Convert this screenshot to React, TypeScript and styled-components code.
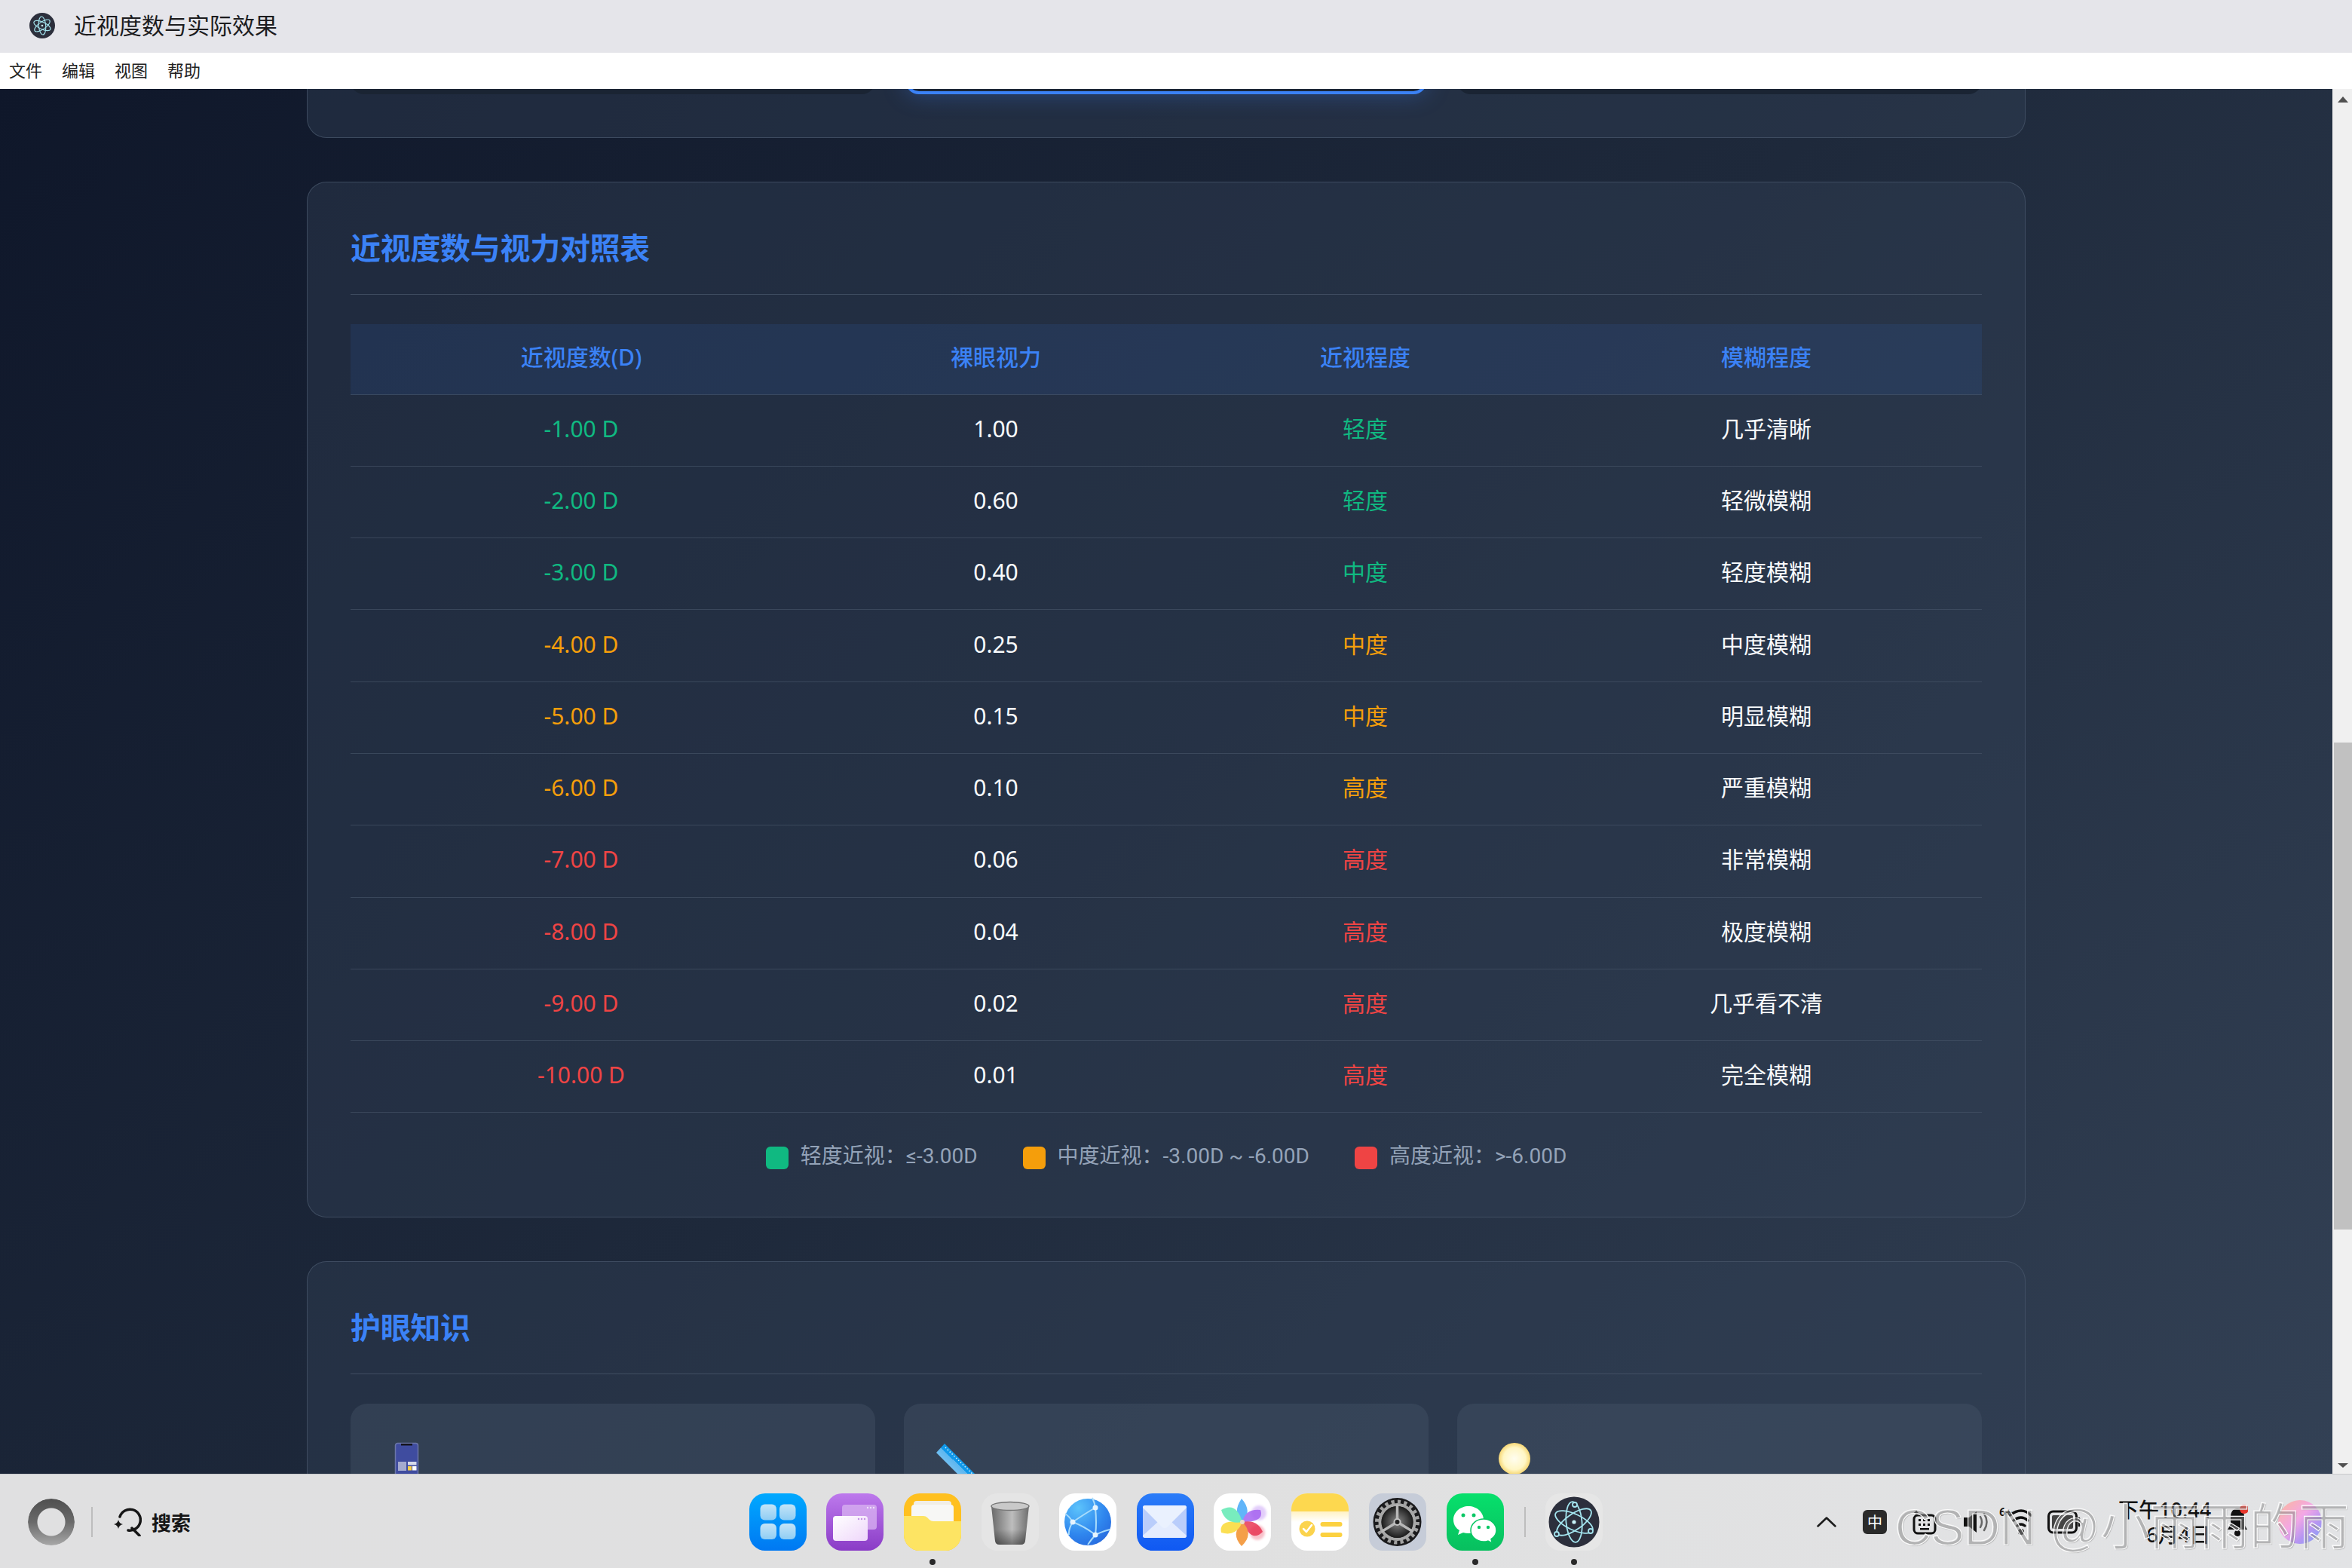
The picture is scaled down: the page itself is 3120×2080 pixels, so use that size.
import React from "react";
import styled, { createGlobalStyle } from "styled-components";

const GlobalStyle = createGlobalStyle`
  html, body {
    margin: 0;
    padding: 0;
    background: #e0e0e0;
  }
  body {
    font-family: "Noto Sans", "Noto Sans CJK SC", sans-serif;
  }
  * {
    box-sizing: border-box;
  }
`;

const GREEN = "#10b981";
const ORANGE = "#f59e0b";
const RED = "#ef4444";

const rows = [
  { d: "-1.00 D", v: "1.00", level: "轻度", blur: "几乎清晰", color: GREEN },
  { d: "-2.00 D", v: "0.60", level: "轻度", blur: "轻微模糊", color: GREEN },
  { d: "-3.00 D", v: "0.40", level: "中度", blur: "轻度模糊", color: GREEN },
  { d: "-4.00 D", v: "0.25", level: "中度", blur: "中度模糊", color: ORANGE },
  { d: "-5.00 D", v: "0.15", level: "中度", blur: "明显模糊", color: ORANGE },
  { d: "-6.00 D", v: "0.10", level: "高度", blur: "严重模糊", color: ORANGE },
  { d: "-7.00 D", v: "0.06", level: "高度", blur: "非常模糊", color: RED },
  { d: "-8.00 D", v: "0.04", level: "高度", blur: "极度模糊", color: RED },
  { d: "-9.00 D", v: "0.02", level: "高度", blur: "几乎看不清", color: RED },
  { d: "-10.00 D", v: "0.01", level: "高度", blur: "完全模糊", color: RED },
];

const legend = [
  { label: "轻度近视：≤-3.00D", color: GREEN },
  { label: "中度近视：-3.00D ~ -6.00D", color: ORANGE },
  { label: "高度近视：>-6.00D", color: RED },
];

const Screen = styled.div`
  position: relative;
  width: 3120px;
  height: 2080px;
  display: flex;
  flex-direction: column;
  overflow: hidden;
`;

const TitleBar = styled.div`
  height: 70px;
  flex: none;
  background: #e5e5ea;
  display: flex;
  align-items: center;
  padding: 0 0 3px 39px;
  gap: 25px;
  font-size: 30px;
  line-height: 40px;
  color: #1c1c1e;
`;

const MenuBar = styled.div`
  height: 48px;
  flex: none;
  background: #fff;
  display: flex;
  align-items: center;
  padding: 0 0 3px 12px;
  gap: 26px;
  font-size: 22px;
  line-height: 30px;
  color: #222;
`;

const Middle = styled.div`
  flex: 1;
  min-height: 0;
  display: flex;
`;

const Content = styled.div`
  flex: 1;
  min-width: 0;
  overflow: hidden;
  display: flex;
  flex-direction: column;
  align-items: center;
  gap: 58px;
  background: linear-gradient(135deg, #0f172a 0%, #1e293b 50%, #334155 100%);
`;

const Card = styled.section<{ $clipped?: boolean }>`
  width: 2280px;
  flex: none;
  padding: 58px 57px ${(p) => (p.$clipped ? "57px" : "58px")};
  margin-top: ${(p) => (p.$clipped ? "-150px" : "0")};
  background: rgba(51, 65, 85, 0.42);
  border: 1px solid rgba(71, 85, 105, 0.75);
  border-radius: 26px;
`;

const Options = styled.div`
  height: 98px;
  display: grid;
  grid-template-columns: repeat(3, 1fr);
  gap: 38px;
`;

const Option = styled.div<{ $active?: boolean }>`
  background: ${(p) => (p.$active ? "#1b2636" : "#1a2433")};
  border-radius: 18px;
  border: ${(p) => (p.$active ? "4px solid #3b82f6" : "none")};
  box-shadow: ${(p) => (p.$active ? "0 0 30px rgba(59, 130, 246, 0.35)" : "none")};
  margin: ${(p) => (p.$active ? "0 2px" : "0")};
`;

const Heading = styled.h2`
  margin: 0 0 39px;
  height: 91px;
  padding-bottom: 32px;
  border-bottom: 1px solid rgba(71, 85, 105, 0.8);
  font-size: 40px;
  line-height: 58px;
  letter-spacing: -0.3px;
  font-weight: 700;
  color: #3b82f6;
`;

const Row = styled.div<{ $head?: boolean }>`
  display: grid;
  grid-template-columns: 612px 488px 492px 572px;
  height: ${(p) => (p.$head ? "93.5px" : "95.3px")};
  border-bottom: 1px solid rgba(71, 85, 105, 0.65);
  background: ${(p) => (p.$head ? "rgba(59, 130, 246, 0.1)" : "transparent")};
  color: ${(p) => (p.$head ? "#3b82f6" : "#f8fafc")};
  font-weight: ${(p) => (p.$head ? 500 : 400)};
  font-size: 30px;
  line-height: 40px;
`;

const Cell = styled.div<{ $color?: string }>`
  display: flex;
  align-items: center;
  justify-content: center;
  padding-bottom: 4px;
  color: ${(p) => p.$color || "inherit"};
`;

const Legend = styled.div`
  display: flex;
  justify-content: center;
  gap: 60px;
  height: 30px;
  margin: 45px 0 5px;
  font-family: Roboto, "Noto Sans CJK SC", sans-serif;
  font-size: 28px;
  line-height: 30px;
  color: #94a3b8;
`;

const LegendItem = styled.div`
  display: flex;
  align-items: center;
  gap: 16px;
`;

const LegendText = styled.span`
  padding-bottom: 4px;
`;

const Swatch = styled.span<{ $color: string }>`
  width: 30px;
  height: 30px;
  border-radius: 6px;
  background: ${(p) => p.$color};
`;

const TipGrid = styled.div`
  display: grid;
  grid-template-columns: repeat(3, 1fr);
  gap: 38px;
`;

const Tip = styled.div`
  height: 300px;
  padding: 52px 46px;
  background: rgba(71, 85, 105, 0.4);
  border-radius: 22px;
`;

const Emoji = styled.svg`
  display: block;
  width: 60px;
  height: 60px;
  overflow: visible;
`;

const ScrollBar = styled.div`
  width: 26px;
  flex: none;
  background: #f0f0f0;
  display: flex;
  flex-direction: column;
  align-items: flex-end;
`;

const Arrow = styled.span<{ $down?: boolean }>`
  width: 0;
  height: 0;
  margin: ${(p) => (p.$down ? "auto 5px 8px 0" : "10px 5px 0 0")};
  border-left: 7px solid transparent;
  border-right: 7px solid transparent;
  ${(p) => (p.$down ? "border-top: 6px solid #505050;" : "border-bottom: 8px solid #505050;")}
`;

const Thumb = styled.div`
  width: 24px;
  height: 646px;
  margin-top: 849px;
  background: #c1c1c1;
`;

const Taskbar = styled.footer`
  height: 125px;
  flex: none;
  background: linear-gradient(90deg, #e0e0e1, #e0e0e0 50%, #e2e3e5);
  border-top: 1px solid #c9cacc;
  padding-top: 1px;
  display: grid;
  grid-template-columns: 1fr auto 1fr;
  align-items: center;
`;

const TaskLeft = styled.div`
  display: flex;
  align-items: center;
  padding-left: 37px;
`;

const Ring = styled.div`
  width: 62px;
  height: 62px;
  border-radius: 50%;
  background: linear-gradient(180deg, #4f4f4f, #6a6a6a 50%, #a8a8a8);
  -webkit-mask: radial-gradient(circle, transparent 18px, #000 19px);
  mask: radial-gradient(circle, transparent 18px, #000 19px);
`;

const Divider = styled.span<{ $left: number; $right: number }>`
  width: 2px;
  height: 40px;
  background: #bdbdbd;
  margin: 0 ${(p) => p.$right}px 0 ${(p) => p.$left}px;
`;

const SearchText = styled.span`
  font-size: 26px;
  font-weight: 700;
  color: #161616;
  margin-left: 13px;
`;

const Dock = styled.div`
  display: flex;
  align-items: center;
  gap: 26.8px;
`;

const DockSlot = styled.div`
  position: relative;
  width: 76px;
  height: 76px;
  svg {
    display: block;
  }
`;

const RunDot = styled.span`
  position: absolute;
  left: 34px;
  bottom: -19px;
  width: 8px;
  height: 8px;
  border-radius: 50%;
  background: #2a2a2a;
`;

const Tray = styled.div`
  display: flex;
  align-items: center;
  justify-content: flex-end;
  padding-right: 39px;
`;

const TrayItem = styled.div<{ $gap: number }>`
  position: relative;
  display: flex;
  margin-left: ${(p) => p.$gap}px;
`;

const ImeBadge = styled.div`
  width: 32px;
  height: 32px;
  border-radius: 6px;
  background: #2a2a2a;
  color: #fff;
  font-size: 20px;
  display: flex;
  align-items: center;
  justify-content: center;
`;

const Clock = styled.div`
  width: 122px;
  text-align: right;
  font-size: 27px;
  line-height: 33px;
  font-weight: 500;
  color: #111;
  white-space: nowrap;
`;

const Watermark = styled.div`
  position: absolute;
  right: 4px;
  bottom: 19px;
  font-family: "Liberation Sans", "Noto Sans CJK SC", sans-serif;
  font-size: 66px;
  line-height: 70px;
  white-space: nowrap;
  color: rgba(255, 255, 255, 0.08);
  -webkit-text-stroke: 1.2px #fbfbfb;
  text-shadow: 1px 1px 1px rgba(120, 120, 120, 0.5);
`;

const ElectronMark = ({ size }: { size: number }) => (
  <svg width={size} height={size} viewBox="0 0 76 76">
    <g fill="none" stroke="#a3e4ee" strokeWidth="2.500">
      <ellipse cx="38" cy="38" rx="27" ry="10.500" transform="rotate(25 38 38)" />
      <ellipse cx="38" cy="38" rx="27" ry="10.500" transform="rotate(85 38 38)" />
      <ellipse cx="38" cy="38" rx="27" ry="10.500" transform="rotate(145 38 38)" />
    </g>
    <circle cx="38" cy="38" r="3" fill="#c7f2f8" />
  </svg>
);

const AppBadge = styled.div`
  width: 34px;
  height: 34px;
  border-radius: 50%;
  background: #2c2f3c;
`;

const icons = {
  launcher: (
    <svg width="76" height="76" viewBox="0 0 76 76">
      <defs>
        <linearGradient id="lnA" x1="0" y1="0" x2="0" y2="1">
          <stop offset="0" stopColor="#00a9ff" />
          <stop offset="1" stopColor="#0078f2" />
        </linearGradient>
        <linearGradient id="lnB" x1="0" y1="0" x2="0" y2="1">
          <stop offset="0" stopColor="#c4e4f7" />
          <stop offset="1" stopColor="#8fcdf4" />
        </linearGradient>
      </defs>
      <rect width="76" height="76" rx="21" fill="url(#lnA)" />
      <rect x="14.500" y="14.500" width="21.500" height="21" rx="6" fill="url(#lnB)" />
      <rect x="40" y="14.500" width="21.500" height="21" rx="6" fill="url(#lnB)" />
      <rect x="14.500" y="40" width="21.500" height="21" rx="6" fill="url(#lnB)" />
      <rect x="40" y="40" width="21.500" height="21" rx="6" fill="url(#lnB)" />
    </svg>
  ),
  windows: (
    <svg width="76" height="76" viewBox="0 0 76 76">
      <defs>
        <linearGradient id="wnA" x1="0" y1="0" x2="0" y2="1">
          <stop offset="0" stopColor="#bd79ec" />
          <stop offset="1" stopColor="#8a3cc6" />
        </linearGradient>
        <linearGradient id="wnB" x1="0" y1="0" x2="1" y2="1">
          <stop offset="0" stopColor="#ffffff" />
          <stop offset="1" stopColor="#eed6fa" />
        </linearGradient>
      </defs>
      <rect width="76" height="76" rx="21" fill="url(#wnA)" />
      <rect x="21" y="15" width="46" height="33" rx="4" fill="#d9b4f1" opacity="0.75" />
      <rect x="9" y="30" width="46" height="33" rx="4" fill="url(#wnB)" />
      <g fill="#c58fe6">
        <circle cx="43" cy="34" r="1.200" />
        <circle cx="47" cy="34" r="1.200" />
        <circle cx="51" cy="34" r="1.200" />
      </g>
      <g fill="#efe0f8">
        <circle cx="55" cy="19" r="1.200" />
        <circle cx="59" cy="19" r="1.200" />
        <circle cx="63" cy="19" r="1.200" />
      </g>
    </svg>
  ),
  folder: (
    <svg width="76" height="76" viewBox="0 0 76 76">
      <rect width="76" height="76" rx="21" fill="#ffc01f" />
      <rect x="13" y="10" width="50" height="30" rx="4" fill="#f1eee6" />
      <rect x="10" y="15" width="56" height="30" rx="4" fill="#f7f7f5" />
      <path d="M0 30h26q3 0 5 2l3 3q2 2 5 2h37v18a21 21 0 0 1-21 21H21A21 21 0 0 1 0 55z" fill="#fde463" />
    </svg>
  ),
  trash: (
    <svg width="76" height="76" viewBox="0 0 76 76">
      <defs>
        <linearGradient id="trA" x1="0" y1="0" x2="1" y2="0">
          <stop offset="0" stopColor="#6a6a6a" />
          <stop offset="0.55" stopColor="#bdbdbd" />
          <stop offset="1" stopColor="#6e6e6e" />
        </linearGradient>
        <linearGradient id="trB" x1="0" y1="0" x2="0" y2="1">
          <stop offset="0.6" stopColor="#000" stopOpacity="0" />
          <stop offset="1" stopColor="#000" stopOpacity="0.4" />
        </linearGradient>
      </defs>
      <rect width="76" height="76" rx="21" fill="#e5e5e5" />
      <path d="M13 17h50l-5 46q-.5 5-6 5H24q-5.500 0-6-5z" fill="url(#trA)" />
      <path d="M13 17h50l-5 46q-.5 5-6 5H24q-5.500 0-6-5z" fill="url(#trB)" />
      <ellipse cx="38" cy="17" rx="25" ry="5.500" fill="#c9c9c9" stroke="#777" strokeWidth="1.500" />
    </svg>
  ),
  globe: (
    <svg width="76" height="76" viewBox="0 0 76 76">
      <defs>
        <radialGradient id="glA" cx="0.3" cy="0.2" r="0.95">
          <stop offset="0" stopColor="#5cc3fb" />
          <stop offset="0.6" stopColor="#2f86ee" />
          <stop offset="1" stopColor="#2566dc" />
        </radialGradient>
      </defs>
      <rect width="76" height="76" rx="21" fill="#fff" />
      <ellipse cx="38" cy="38" rx="31" ry="31" fill="url(#glA)" />
      <g fill="none" stroke="#a9dcfb" strokeWidth="2">
        <path d="M18 38 Q34 27 48 19" />
        <path d="M48 19 Q50 40 48 55" />
        <path d="M18 38 Q34 44 48 55" />
        <path d="M18 38 Q13 30 8 27" />
        <path d="M18 38 Q12 48 13 55" />
        <path d="M48 55 Q42 62 38 68" />
        <path d="M48 55 Q58 50 67 48" />
        <path d="M44 6 Q47 12 48 19" />
      </g>
      <g fill="#e6f4fe">
        <circle cx="18" cy="38" r="3.500" />
        <circle cx="48" cy="19" r="3.500" />
        <circle cx="48" cy="55" r="3.500" />
      </g>
    </svg>
  ),
  mail: (
    <svg width="76" height="76" viewBox="0 0 76 76">
      <defs>
        <linearGradient id="mlA" x1="0" y1="0" x2="0" y2="1">
          <stop offset="0" stopColor="#2b7cf8" />
          <stop offset="1" stopColor="#0f58f2" />
        </linearGradient>
      </defs>
      <rect width="76" height="76" rx="21" fill="url(#mlA)" />
      <rect x="8" y="16" width="58" height="43" rx="3" fill="#b9cdfb" />
      <path d="M8 56 L30 36 L44 36 L66 56 q0 3 -3 3 H11 q-3 0 -3 -3z" fill="#e4ecfe" />
      <path d="M8 19q0-3 3-3h52q3 0 3 3L40 45q-3 2-6 0z" fill="#eaf1fe" />
    </svg>
  ),
  photos: (
    <svg width="76" height="76" viewBox="0 0 76 76">
      <defs>
        <filter id="phBlur" x="-20%" y="-20%" width="140%" height="140%">
          <feGaussianBlur stdDeviation="1.800" />
        </filter>
      </defs>
      <rect width="76" height="76" rx="21" fill="#fff" />
      <g opacity="0.3" filter="url(#phBlur)">
        <circle cx="60" cy="26" r="10" fill="#a35ef0" />
        <circle cx="58" cy="52" r="10" fill="#e8304f" />
      </g>
      <g opacity="0.82">
        <path d="M38 38 Q24 26 37 7 Q52 24 38 38z" fill="#3fa6f8" />
        <path d="M38 38 Q42 20 62 22 Q68 38 38 38z" fill="#a35ef0" />
        <path d="M38 38 Q58 34 65 51 Q50 66 38 38z" fill="#e8304f" />
        <path d="M38 38 Q54 54 37 70 Q22 54 38 38z" fill="#f28a22" />
        <path d="M38 38 Q30 58 10 52 Q6 34 38 38z" fill="#fbd92e" />
        <path d="M38 38 Q16 42 10 22 Q30 10 38 38z" fill="#5be9b0" />
      </g>
      <circle cx="38" cy="38" r="3" fill="#e8dcd0" />
    </svg>
  ),
  notes: (
    <svg width="76" height="76" viewBox="0 0 76 76">
      <defs>
        <linearGradient id="ntA" x1="0" y1="0" x2="0" y2="1">
          <stop offset="0.33" stopColor="#fff3c9" />
          <stop offset="0.5" stopColor="#fff" />
        </linearGradient>
      </defs>
      <rect width="76" height="76" rx="21" fill="url(#ntA)" />
      <path d="M0 24V21A21 21 0 0 1 21 0h34a21 21 0 0 1 21 21v3z" fill="#fdd84f" />
      <circle cx="21" cy="47" r="10.500" fill="#fbd34d" />
      <path d="M16 47l4 4 7-9" fill="none" stroke="#fff" strokeWidth="2.500" strokeLinecap="round" strokeLinejoin="round" />
      <rect x="38.500" y="38" width="29" height="6" rx="3" fill="#fcd140" />
      <rect x="38.500" y="52" width="29" height="6" rx="3" fill="#fcd140" />
    </svg>
  ),
  settings: (
    <svg width="76" height="76" viewBox="0 0 76 76">
      <defs>
        <radialGradient id="stA">
          <stop offset="0" stopColor="#8a8a8a" />
          <stop offset="1" stopColor="#1c1c1c" />
        </radialGradient>
      </defs>
      <rect width="76" height="76" rx="18" fill="#c6ccd8" />
      <circle cx="37.500" cy="38" r="32" fill="#1b1b1d" />
      <circle cx="37.500" cy="38" r="27" fill="none" stroke="#a2a2a2" strokeWidth="5" strokeDasharray="4.200 4.280" />
      <circle cx="37.500" cy="38" r="23" fill="none" stroke="#a8a8a8" strokeWidth="4" />
      <circle cx="37.500" cy="38" r="21" fill="url(#stA)" />
      <g stroke="#b8b8b8" strokeWidth="3.500" strokeLinecap="round">
        <line x1="37.500" y1="38" x2="37.500" y2="16" />
        <line x1="37.500" y1="38" x2="18" y2="50" />
        <line x1="37.500" y1="38" x2="57" y2="50" />
      </g>
      <circle cx="37.500" cy="38" r="4" fill="#222" stroke="#c4c4c4" strokeWidth="2" />
    </svg>
  ),
  wechat: (
    <svg width="76" height="76" viewBox="0 0 76 76">
      <defs>
        <linearGradient id="wcA" x1="0" y1="0" x2="0" y2="1">
          <stop offset="0" stopColor="#07e06c" />
          <stop offset="1" stopColor="#08bf5f" />
        </linearGradient>
      </defs>
      <rect width="76" height="76" rx="21" fill="url(#wcA)" />
      <path d="M29 17c-11 0-20 8-20 18 0 6 3 11 8 14l-2 6 7-3c2.200.6 4.500 1 7 1 11 0 20-8 20-18s-9-18-20-18z" fill="#fff" />
      <path d="M49 34c-9.500 0-17 6.600-17 15s7.500 15 17 15c2 0 4-.3 5.800-.9l5.700 2.900-1.500-5.300c4-2.700 7-7 7-11.700 0-8.400-7.500-15-17-15z" fill="#fff" stroke="#08c764" strokeWidth="1.500" />
      <g fill="#08c764">
        <circle cx="22" cy="29" r="2.500" />
        <circle cx="36" cy="29" r="2.500" />
        <circle cx="43" cy="45" r="2.200" />
        <circle cx="55" cy="45" r="2.200" />
      </g>
    </svg>
  ),
  electron: (
    <svg width="76" height="76" viewBox="0 0 76 76">
      <rect width="76" height="76" rx="20" fill="#e6e6e6" />
      <ellipse cx="38" cy="38" rx="33.500" ry="33.500" fill="#2c2f3c" />
      <g fill="none" stroke="#a3e4ee" strokeWidth="1.800">
        <ellipse cx="38" cy="38" rx="27" ry="10.500" transform="rotate(25 38 38)" />
        <ellipse cx="38" cy="38" rx="27" ry="10.500" transform="rotate(85 38 38)" />
        <ellipse cx="38" cy="38" rx="27" ry="10.500" transform="rotate(145 38 38)" />
      </g>
      <circle cx="38" cy="38" r="2.600" fill="#c7f2f8" />
      <g fill="#2c2f3c" stroke="#a3e4ee" strokeWidth="1.800">
        <circle cx="39" cy="15" r="3" />
        <circle cx="15" cy="54" r="3" />
        <circle cx="60" cy="50" r="3" />
      </g>
    </svg>
  ),
};

const App = () => {
  return (
    <Screen>
      <GlobalStyle />
      <TitleBar>
        <AppBadge>
          <ElectronMark size={34} />
        </AppBadge>
        <span>近视度数与实际效果</span>
      </TitleBar>
      <MenuBar>
        <span>文件</span>
        <span>编辑</span>
        <span>视图</span>
        <span>帮助</span>
      </MenuBar>

      <Middle>
        <Content>
          <Card $clipped>
            <Options>
              <Option />
              <Option $active />
              <Option />
            </Options>
          </Card>

          <Card>
            <Heading>近视度数与视力对照表</Heading>
            <Row $head>
              <Cell>近视度数(D)</Cell>
              <Cell>裸眼视力</Cell>
              <Cell>近视程度</Cell>
              <Cell>模糊程度</Cell>
            </Row>
            {rows.map((r) => (
              <Row key={r.d}>
                <Cell $color={r.color}>{r.d}</Cell>
                <Cell>{r.v}</Cell>
                <Cell $color={r.color}>{r.level}</Cell>
                <Cell>{r.blur}</Cell>
              </Row>
            ))}
            <Legend>
              {legend.map((l) => (
                <LegendItem key={l.label}>
                  <Swatch $color={l.color} />
                  <LegendText>{l.label}</LegendText>
                </LegendItem>
              ))}
            </Legend>
          </Card>

          <Card>
            <Heading>护眼知识</Heading>
            <TipGrid>
              <Tip>
                <Emoji viewBox="0 0 60 60">
                  <rect x="13.500" y="0.500" width="30" height="60" rx="3" fill="#3f4c9f" stroke="#6b76a8" strokeWidth="1.500" />
                  <rect x="21" y="1" width="15" height="2.500" fill="#14141c" />
                  <rect x="17" y="25" width="11" height="12" fill="#a4aacf" />
                  <rect x="30" y="25" width="11.500" height="4.500" fill="#d6d9ea" />
                  <rect x="30" y="31" width="5" height="5.500" fill="#fbcf45" />
                  <rect x="36" y="31" width="5.500" height="5.500" fill="#fff" />
                </Emoji>
              </Tip>
              <Tip>
                <Emoji viewBox="0 0 60 60">
                  <defs>
                    <linearGradient id="rulerFill" x1="0" y1="1" x2="1" y2="0">
                      <stop offset="0" stopColor="#c1e1f8" />
                      <stop offset="0.5" stopColor="#5cb6ef" />
                      <stop offset="0.5" stopColor="#0f98ea" />
                      <stop offset="1" stopColor="#1798e6" />
                    </linearGradient>
                  </defs>
                  <polygon points="8,1 -3,13 47,63 62,55" fill="url(#rulerFill)" />
                  <line x1="9" y1="6" x2="54" y2="50" stroke="#d8effc" strokeWidth="1.500" strokeDasharray="1.500 2.500" />
                </Emoji>
              </Tip>
              <Tip>
                <Emoji viewBox="0 0 60 60">
                  <defs>
                    <radialGradient id="bulbFill">
                      <stop offset="0" stopColor="#fffdf0" />
                      <stop offset="0.7" stopColor="#fff6c4" />
                      <stop offset="1" stopColor="#f7d774" />
                    </radialGradient>
                  </defs>
                  <circle cx="30" cy="21" r="21" fill="url(#bulbFill)" />
                </Emoji>
              </Tip>
            </TipGrid>
          </Card>
        </Content>

        <ScrollBar>
          <Arrow />
          <Thumb />
          <Arrow $down />
        </ScrollBar>
      </Middle>

      <Taskbar>
        <TaskLeft>
          <Ring />
          <Divider $left={22} $right={27} />
          <svg width="38" height="38" viewBox="0 0 38 38">
            <path d="M9 12 A14 14 0 1 1 20 30" fill="none" stroke="#161616" strokeWidth="3.500" strokeLinecap="round" />
            <line x1="25" y1="27" x2="35" y2="37" stroke="#161616" strokeWidth="3.500" strokeLinecap="round" />
            <path d="M7 16 q1 5 6 6 q-5 1 -6 6 q-1 -5 -6 -6 q5 -1 6 -6z" fill="#161616" />
          </svg>
          <SearchText>搜索</SearchText>
        </TaskLeft>

        <Dock>
          <DockSlot>{icons.launcher}</DockSlot>
          <DockSlot>{icons.windows}</DockSlot>
          <DockSlot>
            {icons.folder}
            <RunDot />
          </DockSlot>
          <DockSlot>{icons.trash}</DockSlot>
          <DockSlot>{icons.globe}</DockSlot>
          <DockSlot>{icons.mail}</DockSlot>
          <DockSlot>{icons.photos}</DockSlot>
          <DockSlot>{icons.notes}</DockSlot>
          <DockSlot>{icons.settings}</DockSlot>
          <DockSlot>
            {icons.wechat}
            <RunDot />
          </DockSlot>
          <Divider $left={0} $right={0} />
          <DockSlot>
            {icons.electron}
            <RunDot />
          </DockSlot>
        </Dock>

        <Tray>
          <TrayItem $gap={0}>
            <svg width="26" height="14" viewBox="0 0 26 14">
              <path d="M1.500 12.500 L13 1.500 L24.500 12.500" fill="none" stroke="#1b1b1b" strokeWidth="2.500" strokeLinecap="round" strokeLinejoin="round" />
            </svg>
          </TrayItem>
          <TrayItem $gap={35}>
            <ImeBadge>中</ImeBadge>
          </TrayItem>
          <TrayItem $gap={33}>
            <svg width="33" height="36" viewBox="0 0 33 36">
              <path d="M6 2 q.8 3 3 3.500 q-2.200 .5 -3 3.500 q-.8 -3 -3 -3.500 q2.200 -.5 3 -3.500z" fill="#111" />
              <rect x="3" y="9" width="28" height="24" rx="5" fill="none" stroke="#111" strokeWidth="3" />
              <g fill="#111">
                <rect x="9" y="14" width="3" height="3" />
                <rect x="15" y="14" width="3" height="3" />
                <rect x="21" y="14" width="3" height="3" />
                <rect x="9" y="20" width="3" height="3" />
                <rect x="15" y="20" width="3" height="3" />
                <rect x="21" y="20" width="3" height="3" />
                <rect x="11" y="26" width="12" height="2.500" />
              </g>
            </svg>
          </TrayItem>
          <TrayItem $gap={35}>
            <svg width="34" height="36" viewBox="0 0 34 36">
              <path d="M1 12h7l10-8v28l-10-8H1z" fill="#111" />
              <path d="M23 11q4 7 0 14M28 7q7 11 0 22" fill="none" stroke="#666" strokeWidth="2.500" strokeLinecap="round" />
            </svg>
          </TrayItem>
          <TrayItem $gap={14}>
            <svg width="44" height="46" viewBox="0 0 44 46">
              <path d="M14 14q16-12 28 0M19 21q10-8 19 0M24 28q5-4 10 0" fill="none" stroke="#111" strokeWidth="3.500" strokeLinecap="round" />
              <circle cx="29" cy="36" r="4" fill="#111" />
              <text x="0" y="15" fontSize="15" fontWeight="700" fill="#111" fontFamily="Roboto, sans-serif">6+</text>
            </svg>
          </TrayItem>
          <TrayItem $gap={20}>
            <svg width="44" height="36" viewBox="0 0 44 36">
              <rect x="1.500" y="4" width="37" height="28" rx="6" fill="none" stroke="#111" strokeWidth="3" />
              <rect x="6" y="9" width="28" height="18" rx="2" fill="#444" />
              <path d="M42 13v10" stroke="#111" strokeWidth="2.500" strokeLinecap="round" />
            </svg>
          </TrayItem>
          <TrayItem $gap={50}>
            <Clock>
              下午10:44
              <br />
              6月4日
            </Clock>
          </TrayItem>
          <TrayItem $gap={22}>
            <svg width="28" height="46" viewBox="0 0 28 46">
              <path d="M14 5c-6 0-9 5-9 11v10l-4 7h26l-4-7V16c0-6-3-11-9-11z" fill="#111" />
              <circle cx="14" cy="38" r="4" fill="#111" />
              <circle cx="23" cy="6" r="6" fill="#e8372c" />
            </svg>
          </TrayItem>
          <TrayItem $gap={39}>
            <svg width="60" height="60" viewBox="0 0 60 60">
              <defs>
                <linearGradient id="avatarFill" x1="0" y1="0" x2="1" y2="1">
                  <stop offset="0" stopColor="#fbb89a" />
                  <stop offset="0.45" stopColor="#f3a7e6" />
                  <stop offset="0.7" stopColor="#b595f2" />
                  <stop offset="1" stopColor="#7ca6f7" />
                </linearGradient>
              </defs>
              <circle cx="30" cy="30" r="29" fill="url(#avatarFill)" />
            </svg>
          </TrayItem>
        </Tray>
      </Taskbar>
      <Watermark>CSDN @小雨雨的雨</Watermark>
    </Screen>
  );
};

export default App;
